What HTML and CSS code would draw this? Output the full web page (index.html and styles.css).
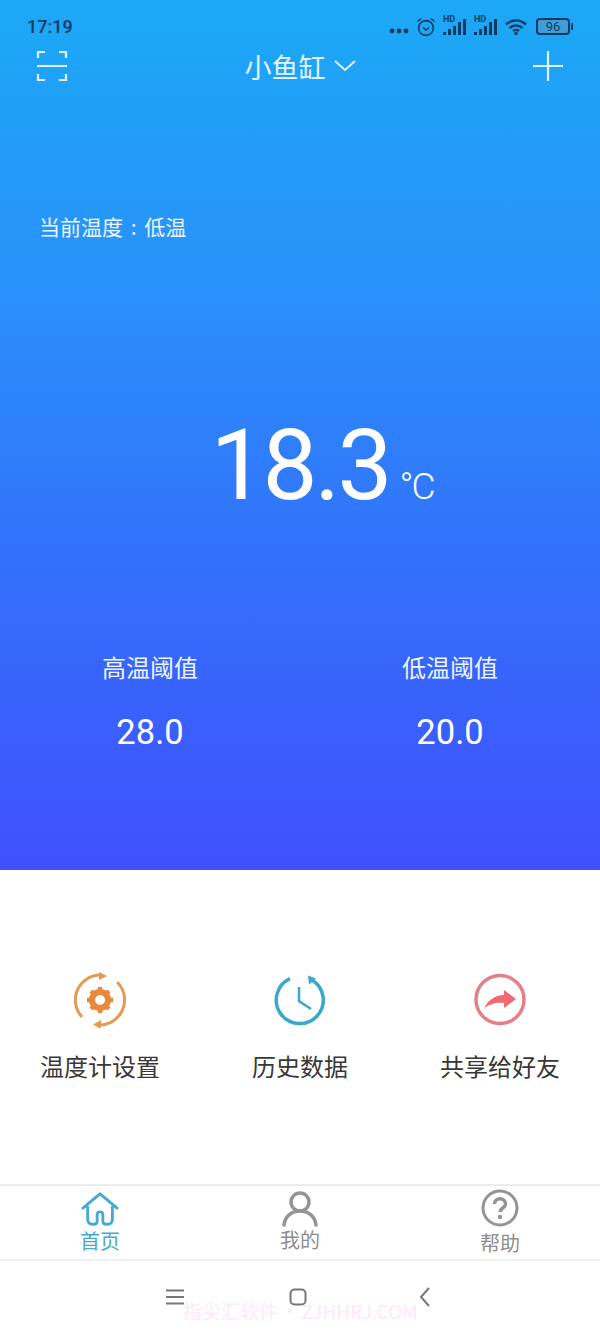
FILE: index.html
```html
<!DOCTYPE html>
<html lang="zh">
<head>
    <meta charset="UTF-8">
    <title>小鱼缸</title>
    <link rel="stylesheet" href="styles.css">
</head>
<body>
<div class="page">
    <section class="hero">
        <div class="status-bar">
            <span class="clock">17:19</span>
            <div class="status-icons">
                <svg class="dots" width="20" height="6" viewBox="0 0 20 6"><circle cx="3" cy="3" r="2.4"/><circle cx="10" cy="3" r="2.4"/><circle cx="17" cy="3" r="2.4"/></svg>
                <svg class="stroke-icon" width="20" height="20" viewBox="0 0 20 20"><circle cx="10" cy="11" r="7.4"/><path d="M7 10.5l3 2.5 3-2.5M1.5 4.5L5 1.5M18.5 4.5L15 1.5"/></svg>
                <div class="signal"><span class="hd">HD</span><svg width="24" height="18" viewBox="0 0 24 18"><rect x="0" y="14" width="3" height="3"/><rect x="5" y="11" width="3" height="6"/><rect x="10" y="8" width="3" height="9"/><rect x="15" y="4" width="3" height="13"/><rect x="20" y="1" width="3" height="16"/></svg></div>
                <div class="signal"><span class="hd">HD</span><svg width="24" height="18" viewBox="0 0 24 18"><rect x="0" y="14" width="3" height="3"/><rect x="5" y="11" width="3" height="6"/><rect x="10" y="8" width="3" height="9"/><rect x="15" y="4" width="3" height="13"/><rect x="20" y="1" width="3" height="16"/></svg></div>
                <svg class="stroke-icon wifi" width="24" height="18" viewBox="0 0 24 18"><path d="M1 6.5C7 1 15 1 21 6.5M4.500 10C8.500 6.500 13.500 6.500 17.500 10M8 13c2-1.500 4-1.500 6 0"/><circle class="fill" cx="11" cy="15.500" r="1.800"/></svg>
                <div class="battery"><span class="battery-level">96</span></div>
            </div>
        </div>

        <header class="top-nav">
            <svg class="white-icon" width="32" height="32" viewBox="0 0 32 32"><path d="M2 8V2h7M23 2h7v6M2 24v6h7M30 24v6h-7M1 16h30"/></svg>
            <div class="title">小鱼缸
                <svg class="white-icon chevron" width="22" height="12" viewBox="0 0 22 12"><path d="M1 1l10 9 10-9"/></svg>
            </div>
            <svg class="white-icon" width="32" height="32" viewBox="0 0 32 32"><path d="M16 1v30M1 16h30"/></svg>
        </header>

        <p class="current">当前温度 : 低温</p>

        <div class="reading">
            <span class="temp">18.3</span><span class="unit">°C</span>
        </div>

        <div class="limits">
            <div class="limit">
                <span class="limit-name">高温阈值</span>
                <span class="limit-value">28.0</span>
            </div>
            <div class="limit">
                <span class="limit-name">低温阈值</span>
                <span class="limit-value">20.0</span>
            </div>
        </div>
    </section>

    <section class="actions">
        <div class="action">
            <svg width="56" height="56" viewBox="0 0 56 56" fill="none" stroke="#e59a52" stroke-width="3">
                <path d="M10 45A25 25 0 0 1 28 3"/>
                <path d="M27 0l8 4-8 4z" fill="#e59a52" stroke="none"/>
                <path d="M45 10A25 25 0 0 1 24 52.700"/>
                <path d="M21 52.500l8-4.500v9z" fill="#e59a52" stroke="none"/>
                <circle cx="28" cy="28" r="8" stroke="#e8893c" stroke-width="6"/>
                <path d="M28 15v5M28 36v5M15 28h5M36 28h5M19 19l3.500 3.500M33.500 33.500L37 37M37 19l-3.500 3.500M22.500 33.500L19 37" stroke="#e8893c" stroke-width="4.500"/>
            </svg>
            <span>温度计设置</span>
        </div>
        <div class="action">
            <svg width="56" height="56" viewBox="0 0 56 56" fill="none" stroke="#39a8cc" stroke-width="3.500">
                <path d="M18 6.700A23.500 23.500 0 1 0 40 8"/>
                <path d="M36 3.500l8 3-7 6z" fill="#39a8cc" stroke="none"/>
                <path d="M27 15v14l12 8" stroke-width="2.500"/>
            </svg>
            <span>历史数据</span>
        </div>
        <div class="action">
            <svg width="56" height="56" viewBox="0 0 56 56" fill="none">
                <circle cx="28" cy="27.500" r="24" stroke="#e77f86" stroke-width="3.500"/>
                <path d="M12.500 36C15 29 23 23 32 23V18L44 27 32 36V31C24 30 18 32 12.500 36z" fill="#f4696f"/>
            </svg>
            <span>共享给好友</span>
        </div>
    </section>

    <nav class="tabs">
        <div class="tab tab-active">
            <svg width="38" height="36" viewBox="0 0 40 36" fill="none" stroke="#46a9cf" stroke-width="3" stroke-linejoin="round" stroke-linecap="round"><path d="M2 17L20 2l18 15M7 16v13c0 3 2 5 5 5h2c2 0 3-1 3-3v-7c0-4 6-4 6 0v7c0 2 1 3 3 3h2c3 0 5-2 5-5V16"/></svg>
            <span>首页</span>
        </div>
        <div class="tab">
            <svg width="36" height="36" viewBox="0 0 36 36" fill="none" stroke="#949494" stroke-width="3.500" stroke-linecap="round"><circle cx="18" cy="11" r="9"/><path d="M2 34c1-9 8-14 16-14s15 5 16 14"/></svg>
            <span>我的</span>
        </div>
        <div class="tab tab-help">
            <svg width="38" height="38" viewBox="0 0 38 38" fill="none" stroke="#949494" stroke-width="3"><circle cx="19" cy="19" r="17"/><path d="M13.500 15c0-7 11-7 11 0 0 4-5.500 4-5.500 8" stroke-width="3.500"/><circle cx="19" cy="28" r="1.200" stroke-width="2"/></svg>
            <span>帮助</span>
        </div>
    </nav>

    <footer class="system-bar">
        <svg class="sys-icon" width="18" height="16" viewBox="0 0 18 16"><path d="M0 1.500h18M0 8h18M0 14.500h18"/></svg>
        <svg class="sys-icon" width="18" height="18" viewBox="0 0 18 18"><rect x="1.500" y="1.500" width="15" height="15" rx="4"/></svg>
        <svg class="sys-icon sys-back" width="12" height="20" viewBox="0 0 12 20"><path d="M10 1L2 10l8 9"/></svg>
        <span class="watermark">指尖汇软件 · ZJHHRJ.COM</span>
    </footer>
</div>
</body>
</html>
```

FILE: styles.css
```css
* {
    box-sizing: border-box;
}
body {
    margin: 0;
    font-family: "Noto Sans CJK SC", Roboto, sans-serif;
    background: white;
}
.page {
    width: 600px;
    height: 1333px;
    display: flex;
    flex-direction: column;
    overflow: hidden;
}

/* top blue part */
.hero {
    height: 870px;
    flex: none;
    color: white;
    background: linear-gradient(180deg, #1ba9f6 0%, #2a8ffa 35%, #3370fb 65%, #4150fd 100%);
}
.status-bar {
    height: 38px;
    padding: 15px 27px 0 27px;
    display: flex;
    justify-content: space-between;
    align-items: center;
    color: #123a63;
}
.clock {
    font-family: Roboto, sans-serif;
    font-size: 18px;
    font-weight: 500;
}
.status-icons {
    display: flex;
    align-items: center;
    gap: 7px;
}
.status-icons svg {
    fill: #123a63;
}
.status-icons .stroke-icon {
    fill: none;
    stroke: #123a63;
    stroke-width: 1.6;
}
.status-icons .wifi {
    stroke-width: 2.4;
}
.status-icons .wifi .fill {
    fill: #123a63;
    stroke: none;
}
.dots {
    margin-top: 8px;
}
.signal {
    display: flex;
    position: relative;
    width: 24px;
    height: 18px;
}
.hd {
    position: absolute;
    left: 0;
    top: -4px;
    font-family: Roboto, sans-serif;
    font-size: 9px;
    font-weight: 700;
}
.battery {
    width: 34px;
    height: 17px;
    border: 2px solid #123a63;
    border-radius: 4px;
    margin-right: 3px;
    position: relative;
    display: flex;
    align-items: center;
    justify-content: center;
    background: #3d9fd6;
}
.battery::after {
    content: "";
    position: absolute;
    right: -5px;
    top: 3px;
    width: 2px;
    height: 7px;
    background: #123a63;
}
.battery-level {
    font-family: Roboto, sans-serif;
    font-size: 13px;
}
.top-nav {
    height: 56px;
    padding: 0 36px;
    display: flex;
    justify-content: space-between;
    align-items: center;
}
.white-icon {
    fill: none;
    stroke: #e3f4fe;
    stroke-width: 2.2;
}
.chevron {
    stroke-width: 1.8;
}
.title {
    font-size: 27px;
    display: flex;
    align-items: center;
    gap: 8px;
    color: #e3f4fe;
}
.current {
    margin: 114px 0 0 39px;
    font-size: 21px;
    line-height: 36px;
    word-spacing: 3px;
    color: #eef6ff;
}
.reading {
    margin-top: 170px;
    display: flex;
    justify-content: center;
    align-items: baseline;
    height: 104px;
    padding-left: 44px;
}
.temp {
    font-family: Roboto, sans-serif;
    font-size: 98px;
    line-height: 104px;
    letter-spacing: -3px;
}
.unit {
    font-family: Roboto, sans-serif;
    font-weight: 300;
    font-size: 37px;
    letter-spacing: -2px;
    margin-left: 10px;
}
.limits {
    margin-top: 133px;
    display: grid;
    grid-template-columns: 300px 300px;
}
.limit {
    display: flex;
    flex-direction: column;
    align-items: center;
    gap: 29px;
}
.limit-name {
    font-size: 24px;
    line-height: 32px;
    color: #eef6ff;
}
.limit-value {
    font-family: Roboto, sans-serif;
    font-size: 34.500px;
    line-height: 40px;
}

/* the three buttons */
.actions {
    height: 316px;
    flex: none;
    padding-top: 102px;
    display: grid;
    grid-template-columns: repeat(3, 200px);
    border-bottom: 2px solid #ececec;
}
.action {
    display: flex;
    flex-direction: column;
    align-items: center;
    gap: 20px;
}
.action span {
    font-size: 24px;
    line-height: 36px;
    color: #383838;
}

/* bottom tabs */
.tabs {
    height: 75px;
    flex: none;
    display: grid;
    grid-template-columns: repeat(3, 200px);
    border-bottom: 2px solid #f0f0f0;
}
.tab {
    display: flex;
    flex-direction: column;
    align-items: center;
    padding-top: 5px;
    color: #8d8d8d;
}
.tab span {
    font-size: 20px;
    line-height: 26px;
}
.tab-active {
    color: #46a9cf;
    gap: 1px;
}
.tab-help {
    padding-top: 3px;
    gap: 3px;
}
.system-bar {
    flex: 1;
    position: relative;
    display: flex;
    align-items: center;
    gap: 105px;
    padding-left: 166px;
}
.sys-icon {
    fill: none;
    stroke: #777;
    stroke-width: 2;
}
.sys-back {
    margin-left: 7px;
}
.watermark {
    position: absolute;
    left: 183px;
    top: 38px;
    font-size: 19px;
    line-height: 24px;
    word-spacing: -2px;
    color: #fde9fb;
    white-space: nowrap;
}
```
